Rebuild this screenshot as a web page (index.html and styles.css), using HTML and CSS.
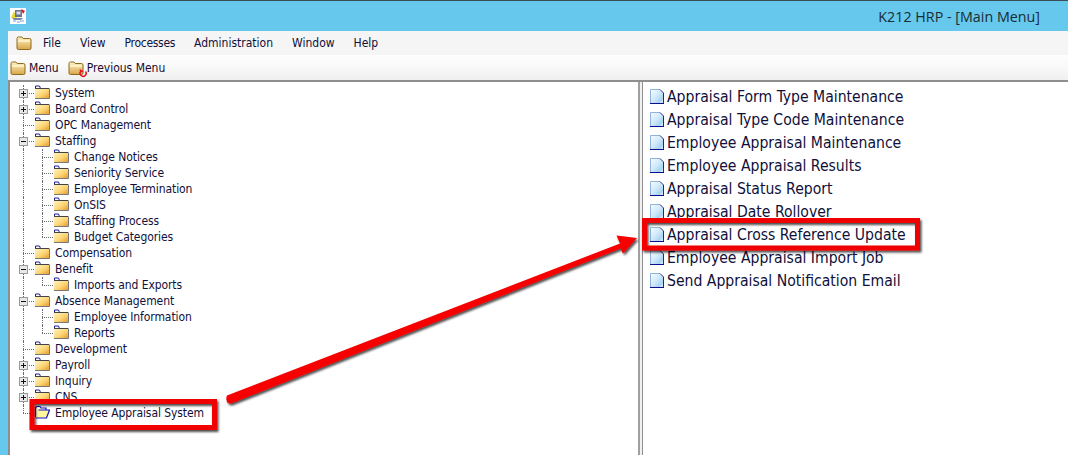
FILE: index.html
```html
<!DOCTYPE html>
<html lang="en">
<head>
<meta charset="utf-8">
<title>K212 HRP - [Main Menu]</title>
<link rel="stylesheet" href="styles.css">
</head>
<body>
<svg class="defs" width="0" height="0" aria-hidden="true">
  <defs>
    <linearGradient id="fg" x1="0" y1="0" x2="1" y2="1">
      <stop offset="0" stop-color="#fff6c8"/><stop offset="0.55" stop-color="#fcd676"/><stop offset="1" stop-color="#e59a2c"/>
    </linearGradient>
    <linearGradient id="tb" x1="0" y1="0" x2="0" y2="1">
      <stop offset="0" stop-color="#fff3c4"/><stop offset="1" stop-color="#d8a648"/>
    </linearGradient>
    <linearGradient id="pg" x1="0" y1="0" x2="1" y2="1">
      <stop offset="0" stop-color="#f4fbff"/><stop offset="0.5" stop-color="#cfe8fa"/><stop offset="0.8" stop-color="#a8d4f2"/><stop offset="1" stop-color="#e6f3fb"/>
    </linearGradient>
    <symbol id="folder" viewBox="0 0 16 14">
      <path d="M1.5 3.500V1h4l1 2.500" fill="#fff" stroke="#1c1c9c" stroke-width="1"/>
      <path d="M1 13.500V3.500h14v10z" fill="url(#fg)"/>
      <path d="M1 13.500h14.500V3.500" fill="none" stroke="#77777a" stroke-width="1"/>
      <path d="M1 3.500h14" stroke="#444" stroke-width="1"/>
    </symbol>
    <symbol id="open" viewBox="0 0 16 14">
      <path d="M1.500 12V2.500L3 1.500h3l1 1.500h5V5" fill="#fffbd0" stroke="#1212c8" stroke-width="1.200"/>
      <path d="M1.500 13L4.500 5H15.500L12.500 13z" fill="#fff6a0"/>
      <path d="M4.500 5H15.500L12.500 13H1.500" fill="none" stroke="#1212c8" stroke-width="1.200"/>
    </symbol>
    <symbol id="tool" viewBox="0 0 16 14">
      <path d="M1 12V2.500Q1 1 2.500 1h3.500l1.200 1.500h6.300Q15 2.500 15 4v8q0 1.500-1.500 1.500h-11Q1 13.500 1 12z" fill="url(#tb)" stroke="#8c6a20" stroke-width="1"/>
      <path d="M2 5h12" stroke="#fff6d4" stroke-width="1.500"/>
    </symbol>
    <symbol id="page" viewBox="0 0 14 15">
      <path d="M1 14V1h9l3 3v10z" fill="url(#pg)"/>
      <path d="M.5 14.500V.5h9.500" fill="none" stroke="#8fb4dc" stroke-width="1"/>
      <path d="M10 .5l3.500 3.500v10" fill="none" stroke="#26267c" stroke-width="1"/>
      <path d="M0 14.500h14" stroke="#0c0c90" stroke-width="1"/>
    </symbol>
  </defs>
</svg>

<div class="window">
  <header class="titlebar">
    <svg class="appicon" width="16" height="16" viewBox="0 0 16 16">
      <rect width="16" height="16" fill="#fff"/>
      <path d="M1 10l3-7 3 7z" fill="#e6d82c"/>
      <rect x="5" y="2" width="7" height="7" fill="#6a7590"/>
      <rect x="6.500" y="3.500" width="4" height="3" fill="#d4dcea"/>
      <path d="M11 1l4 2-2 3z" fill="#e0141c"/>
      <path d="M2 10h11l-2 2H4z" fill="#7a88a8"/>
      <path d="M3 13h3M7 14h3M10 13h4" stroke="#6ca8e0" stroke-width="1"/>
    </svg>
    <span class="apptitle">K212 HRP - [Main Menu]</span>
  </header>

  <div class="chrome">
    <nav class="menubar">
      <svg class="menuicon" width="16" height="14"><use href="#tool"/></svg>
      <span class="mi mi-file">File</span>
      <span class="mi mi-view">View</span>
      <span class="mi mi-proc">Processes</span>
      <span class="mi mi-admin">Administration</span>
      <span class="mi mi-win">Window</span>
      <span class="mi">Help</span>
    </nav>
    <div class="toolbar">
      <span class="tool">
        <svg width="16" height="14"><use href="#tool"/></svg>Menu
      </span>
      <span class="tool tool-prev">
        <span class="prevwrap">
          <svg width="16" height="14"><use href="#tool"/></svg>
          <svg class="prevbadge" width="8" height="9" viewBox="0 0 8 9"><path d="M6.500 2.500A3 3 0 1 1 2 2.200M1 .5l1 2 2-.8" fill="none" stroke="#e8101c" stroke-width="1.500"/></svg>
        </span>Previous Menu
      </span>
    </div>

    <main class="panes">
      <section class="tree">
        <div class="row"><span class="cell"><i class="line hz vt"></i><b class="exp plus"></b></span><svg class="fi"><use href="#folder"/></svg><span class="lbl">System</span></div>
        <div class="row"><span class="cell"><i class="line hz vt"></i><b class="exp plus"></b></span><svg class="fi"><use href="#folder"/></svg><span class="lbl">Board Control</span></div>
        <div class="row"><span class="cell"><i class="line hz vt"></i></span><svg class="fi"><use href="#folder"/></svg><span class="lbl">OPC Management</span></div>
        <div class="row"><span class="cell"><i class="line hz vt"></i><b class="exp minus"></b></span><svg class="fi"><use href="#folder"/></svg><span class="lbl">Staffing</span></div>
        <div class="row"><span class="cell"><i class="line vt"></i></span><span class="cell sub"><i class="line hz vt"></i></span><svg class="fi"><use href="#folder"/></svg><span class="lbl">Change Notices</span></div>
        <div class="row"><span class="cell"><i class="line vt"></i></span><span class="cell sub"><i class="line hz vt"></i></span><svg class="fi"><use href="#folder"/></svg><span class="lbl">Seniority Service</span></div>
        <div class="row"><span class="cell"><i class="line vt"></i></span><span class="cell sub"><i class="line hz vt"></i></span><svg class="fi"><use href="#folder"/></svg><span class="lbl">Employee Termination</span></div>
        <div class="row"><span class="cell"><i class="line vt"></i></span><span class="cell sub"><i class="line hz vt"></i></span><svg class="fi"><use href="#folder"/></svg><span class="lbl">OnSIS</span></div>
        <div class="row"><span class="cell"><i class="line vt"></i></span><span class="cell sub"><i class="line hz vt"></i></span><svg class="fi"><use href="#folder"/></svg><span class="lbl">Staffing Process</span></div>
        <div class="row"><span class="cell"><i class="line vt"></i></span><span class="cell sub"><i class="line hz vt end"></i></span><svg class="fi"><use href="#folder"/></svg><span class="lbl">Budget Categories</span></div>
        <div class="row"><span class="cell"><i class="line hz vt"></i></span><svg class="fi"><use href="#folder"/></svg><span class="lbl">Compensation</span></div>
        <div class="row"><span class="cell"><i class="line hz vt"></i><b class="exp minus"></b></span><svg class="fi"><use href="#folder"/></svg><span class="lbl">Benefit</span></div>
        <div class="row"><span class="cell"><i class="line vt"></i></span><span class="cell sub"><i class="line hz vt end"></i></span><svg class="fi"><use href="#folder"/></svg><span class="lbl">Imports and Exports</span></div>
        <div class="row"><span class="cell"><i class="line hz vt"></i><b class="exp minus"></b></span><svg class="fi"><use href="#folder"/></svg><span class="lbl">Absence Management</span></div>
        <div class="row"><span class="cell"><i class="line vt"></i></span><span class="cell sub"><i class="line hz vt"></i></span><svg class="fi"><use href="#folder"/></svg><span class="lbl">Employee Information</span></div>
        <div class="row"><span class="cell"><i class="line vt"></i></span><span class="cell sub"><i class="line hz vt end"></i></span><svg class="fi"><use href="#folder"/></svg><span class="lbl">Reports</span></div>
        <div class="row"><span class="cell"><i class="line hz vt"></i></span><svg class="fi"><use href="#folder"/></svg><span class="lbl">Development</span></div>
        <div class="row"><span class="cell"><i class="line hz vt"></i><b class="exp plus"></b></span><svg class="fi"><use href="#folder"/></svg><span class="lbl">Payroll</span></div>
        <div class="row"><span class="cell"><i class="line hz vt"></i><b class="exp plus"></b></span><svg class="fi"><use href="#folder"/></svg><span class="lbl">Inquiry</span></div>
        <div class="row"><span class="cell"><i class="line hz vt"></i><b class="exp plus"></b></span><svg class="fi"><use href="#folder"/></svg><span class="lbl">CNS</span></div>
        <div class="row"><span class="cell"><i class="line hz vt end"></i></span><svg class="fi"><use href="#open"/></svg><span class="lbl">Employee Appraisal System</span></div>
      </section>
      <div class="splitter"></div>
      <section class="list">
        <div class="item"><svg class="pi"><use href="#page"/></svg><span>Appraisal Form Type Maintenance</span></div>
        <div class="item"><svg class="pi"><use href="#page"/></svg><span>Appraisal Type Code Maintenance</span></div>
        <div class="item"><svg class="pi"><use href="#page"/></svg><span>Employee Appraisal Maintenance</span></div>
        <div class="item"><svg class="pi"><use href="#page"/></svg><span>Employee Appraisal Results</span></div>
        <div class="item"><svg class="pi"><use href="#page"/></svg><span>Appraisal Status Report</span></div>
        <div class="item"><svg class="pi"><use href="#page"/></svg><span>Appraisal Date Rollover</span></div>
        <div class="item"><svg class="pi"><use href="#page"/></svg><span>Appraisal Cross Reference Update</span></div>
        <div class="item"><svg class="pi"><use href="#page"/></svg><span>Employee Appraisal Import Job</span></div>
        <div class="item"><svg class="pi"><use href="#page"/></svg><span>Send Appraisal Notification Email</span></div>
      </section>
    </main>
  </div>
</div>

<svg class="annot" width="1068" height="455" viewBox="0 0 1068 455" aria-hidden="true">
  <defs>
    <filter id="sh" x="-5%" y="-10%" width="110%" height="120%">
      <feDropShadow dx="1.500" dy="2" stdDeviation="1.200" flood-color="#000" flood-opacity="0.7"/>
    </filter>
  </defs>
  <g filter="url(#sh)">
    <rect x="32" y="401.500" width="182.500" height="26" fill="none" stroke="#f00000" stroke-width="5"/>
    <rect x="644.500" y="220.500" width="273" height="27.500" fill="none" stroke="#f00000" stroke-width="5"/>
    <path d="M227 395.500L620 243.500L616.500 235.500L637 238L623 253.500L620.500 248.500L231 403.500Q227 404 226.500 400Q226 397 227 395.500z" fill="#f60000"/>
  </g>
</svg>
</body>
</html>
```
FILE: styles.css
```css
* { box-sizing: border-box; }
html, body { margin: 0; padding: 0; }
body {
  width: 1068px;
  height: 455px;
  overflow: hidden;
  background: #fff;
  position: relative;
  font-family: "DejaVu Sans Condensed", "DejaVu Sans", sans-serif;
  color: #10103a;
}
.defs { position: absolute; }
.window {
  height: 455px;
  display: flex;
  flex-direction: column;
  background: #65c8ec;
  border-top: 1px solid #3c4c54;
}
.titlebar {
  height: 30px;
  flex: none;
  display: flex;
  align-items: center;
  padding: 0 28px 0 10px;
  justify-content: space-between;
}
.appicon { margin-top: -1px; }
.apptitle {
  font: 14.300px "Open Sans", sans-serif;
  color: #1c2c34;
}
.chrome {
  flex: 1;
  margin-left: 8px;
  display: flex;
  flex-direction: column;
  min-height: 0;
}
.menubar {
  height: 24px;
  flex: none;
  background: #f5f5f5;
  display: flex;
  align-items: center;
  padding-left: 8px;
  font-size: 12px;
}
.menuicon { margin-right: 11px; }
.mi-file { margin-right: 19px; }
.mi-view { margin-right: 19px; }
.mi-proc { margin-right: 19px; letter-spacing: -0.300px; }
.mi-admin { margin-right: 19px; }
.mi-win { margin-right: 19px; }
.toolbar {
  height: 25px;
  flex: none;
  background: linear-gradient(#fdfdfd, #fafafa 40%, #efefef);
  display: flex;
  align-items: center;
  padding-left: 2px;
  font-size: 12px;
  gap: 9px;
  color: #1a0a2a;
}
.tool { display: flex; align-items: center; gap: 3px; }
.tool-prev { gap: 1px; }
.prevwrap { position: relative; display: flex; margin-right: 2px; }
.prevbadge { position: absolute; right: -3px; bottom: -3px; }
.panes {
  flex: 1;
  display: flex;
  min-height: 0;
  background: #fff;
  border-top: 2px solid #8e8e8e;
}
.tree {
  width: 630px;
  flex: none;
  padding: 3px 0 0 5px;
  border-left: 2px solid #8e8e8e;
  font-size: 12px;
}
.row {
  height: 16px;
  display: flex;
  align-items: center;
}
.cell {
  width: 19px;
  height: 16px;
  flex: none;
  position: relative;
}
.line { position: absolute; inset: 0; display: block; }
.line.vt::before {
  content: "";
  position: absolute;
  left: 8px;
  top: 0;
  bottom: 0;
  border-left: 1px dotted #6a6a6a;
}
.line.vt.end::before { bottom: 8px; }
.line.hz::after {
  content: "";
  position: absolute;
  left: 8px;
  right: 0;
  top: 8px;
  border-top: 1px dotted #6a6a6a;
}
.exp {
  position: absolute;
  left: 4px;
  top: 4px;
  width: 9px;
  height: 9px;
  border: 1px solid #9a9a9a;
  background: #e8e8e8;
}
.exp::before {
  content: "";
  position: absolute;
  left: 1px;
  right: 1px;
  top: 3px;
  height: 1px;
  background: #111;
}
.exp.plus::after {
  content: "";
  position: absolute;
  top: 1px;
  bottom: 1px;
  left: 3px;
  width: 1px;
  background: #111;
}
.fi { width: 16px; height: 14px; flex: none; margin-right: 5px; margin-top: -2px; }
.lbl { white-space: nowrap; letter-spacing: -0.080px; }
.splitter {
  width: 5px;
  flex: none;
  background: #f0f0f0;
  border-left: 2px solid #a0a0a0;
  border-right: 1px solid #8e8e8e;
}
.list {
  flex: 1;
  padding: 3px 0 0 7px;
  font-size: 15.600px;
}
.item {
  height: 23px;
  display: flex;
  align-items: center;
  white-space: nowrap;
}
.pi { width: 14px; height: 15px; flex: none; margin-right: 3px; }
.annot { position: absolute; left: 0; top: 0; pointer-events: none; }
```
